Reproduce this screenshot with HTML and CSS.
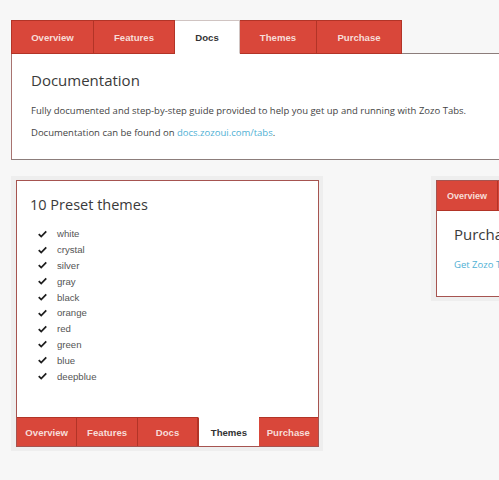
FILE: index.html
```html
<!DOCTYPE html>
<html>
<head>
<meta charset="utf-8">
<link rel="stylesheet" href="styles.css">
</head>
<body>
<div class="page">
  <div class="tabs-top">
    <div class="tabbar">
      <div class="tab w-overview">Overview</div>
      <div class="tab w-features">Features</div>
      <div class="tab active w-docs">Docs</div>
      <div class="tab w-themes">Themes</div>
      <div class="tab w-purchase">Purchase</div>
      <div class="tab-fill"></div>
    </div>
    <div class="panel panel-top">
      <h2 class="title">Documentation</h2>
      <p class="text">Fully documented and step-by-step guide provided to help you get up and running with Zozo Tabs.</p>
      <p class="text">Documentation can be found on <a class="link" href="#">docs.zozoui.com/tabs</a>.</p>
    </div>
  </div>

  <div class="row">
    <div class="frame frame-left">
      <div class="box box-bottom">
        <div class="panel-body">
          <h2 class="title title-themes">10 Preset themes</h2>
          <ul class="checklist">
            <li><svg class="check" viewBox="0 0 12 10"><path d="M1 5.2 L4.3 8.4 L11 1.6" fill="none" stroke="#1e1e1e" stroke-width="2.4"/></svg>white</li>
            <li><svg class="check" viewBox="0 0 12 10"><path d="M1 5.2 L4.3 8.4 L11 1.6" fill="none" stroke="#1e1e1e" stroke-width="2.4"/></svg>crystal</li>
            <li><svg class="check" viewBox="0 0 12 10"><path d="M1 5.2 L4.3 8.4 L11 1.6" fill="none" stroke="#1e1e1e" stroke-width="2.4"/></svg>silver</li>
            <li><svg class="check" viewBox="0 0 12 10"><path d="M1 5.2 L4.3 8.4 L11 1.6" fill="none" stroke="#1e1e1e" stroke-width="2.4"/></svg>gray</li>
            <li><svg class="check" viewBox="0 0 12 10"><path d="M1 5.2 L4.3 8.4 L11 1.6" fill="none" stroke="#1e1e1e" stroke-width="2.4"/></svg>black</li>
            <li><svg class="check" viewBox="0 0 12 10"><path d="M1 5.2 L4.3 8.4 L11 1.6" fill="none" stroke="#1e1e1e" stroke-width="2.4"/></svg>orange</li>
            <li><svg class="check" viewBox="0 0 12 10"><path d="M1 5.2 L4.3 8.4 L11 1.6" fill="none" stroke="#1e1e1e" stroke-width="2.4"/></svg>red</li>
            <li><svg class="check" viewBox="0 0 12 10"><path d="M1 5.2 L4.3 8.4 L11 1.6" fill="none" stroke="#1e1e1e" stroke-width="2.4"/></svg>green</li>
            <li><svg class="check" viewBox="0 0 12 10"><path d="M1 5.2 L4.3 8.4 L11 1.6" fill="none" stroke="#1e1e1e" stroke-width="2.4"/></svg>blue</li>
            <li><svg class="check" viewBox="0 0 12 10"><path d="M1 5.2 L4.3 8.4 L11 1.6" fill="none" stroke="#1e1e1e" stroke-width="2.4"/></svg>deepblue</li>
          </ul>
        </div>
        <div class="tabbar tabbar-bottom">
          <div class="tab tab-eq">Overview</div>
          <div class="tab tab-eq">Features</div>
          <div class="tab tab-eq">Docs</div>
          <div class="tab tab-eq active">Themes</div>
          <div class="tab tab-eq">Purchase</div>
        </div>
      </div>
    </div>

    <div class="frame frame-right">
      <div class="box box-right">
        <div class="tabbar tabbar-small">
          <div class="tab tab-small">Overview</div>
          <div class="tab tab-small">Features</div>
        </div>
        <div class="panel-body panel-right">
          <h2 class="title">Purchase</h2>
          <p class="text"><a class="link" href="#">Get Zozo Tabs</a></p>
        </div>
      </div>
    </div>
  </div>
</div>
</body>
</html>
```

FILE: styles.css
```css
html, body {
  margin: 0;
  padding: 0;
}
body {
  background: #f7f7f7;
  overflow: hidden;
  width: 499px;
  height: 480px;
  font-family: "Open Sans", "Liberation Sans", sans-serif;
}
.page {
  padding: 20px 0 0 11px;
}
.tabs-top {
  width: 560px;
}
.tabbar {
  display: flex;
}
.tab {
  box-sizing: border-box;
  background: #d9473a;
  color: #f7ddd8;
  font-family: "Liberation Sans", Arial, sans-serif;
  font-weight: bold;
  font-size: 9.6px;
  display: flex;
  align-items: center;
  justify-content: center;
  border: 1px solid #b23427;
  border-left: none;
  height: 34px;
}
.tab:first-child {
  border-left: 1px solid #b23427;
}
.tab.active {
  background: #ffffff;
  color: #333333;
  border-color: #d0c4c2;
  border-bottom-color: #ffffff;
}
.w-overview { width: 83px; }
.w-features { width: 81px; }
.w-docs { width: 65px; }
.w-themes { width: 77px; }
.w-purchase { width: 85px; }
.tab-fill {
  flex: 1;
  border-bottom: 1px solid #8c7d7b;
}
.panel {
  background: #ffffff;
}
.panel-top {
  box-sizing: border-box;
  height: 106px;
  border: 1px solid #a87370;
  border-top: none;
  border-bottom-color: #8c7d7b;
  padding: 16px 0 0 19px;
}
.title {
  margin: 0;
  font-family: "Open Sans", "Liberation Sans", sans-serif;
  font-weight: 400;
  font-size: 15px;
  color: #3a3a3a;
  line-height: 20px;
}
.text {
  margin: 14px 0 0;
  font-size: 9.5px;
  line-height: 13px;
  color: #444444;
}
.text + .text {
  margin-top: 9px;
}
.link {
  color: #4fb0d4;
  text-decoration: none;
}
.row {
  display: flex;
  align-items: flex-start;
  margin-top: 16px;
}
.frame {
  background: #eeeeee;
  padding: 4px 4px 4px 5px;
}
.frame-right {
  margin-left: 108px;
  width: 120px;
}
.box {
  background: #ffffff;
  border: 1px solid #a65450;
  box-sizing: border-box;
}
.box-bottom {
  width: 303px;
  height: 267px;
  display: flex;
  flex-direction: column;
}
.panel-body {
  flex: 1;
  padding: 14px 0 0 13px;
}
.title-themes {
  font-size: 14.5px;
}
.checklist {
  list-style: none;
  margin: 11px 0 0;
  padding: 0 0 0 8px;
}
.checklist li {
  display: flex;
  align-items: center;
  height: 15.8px;
  font-family: "Liberation Sans", Arial, sans-serif;
  font-size: 9.6px;
  color: #555555;
}
.check {
  width: 9px;
  height: 8px;
  margin-right: 10px;
}
.tabbar-bottom {
  height: 29px;
}
.tab-eq {
  flex: 1;
  height: 29px;
  border-top: 1px solid #b23427;
  border-bottom: none;
}
.tab-eq:first-child {
  border-left: none;
}
.tab-eq:last-child {
  border-right: none;
}
.tab-eq.active {
  border-top-color: #ffffff;
  border-left: 1px solid #b23427;
  border-right: none;
  border-bottom: none;
}
.box-right {
  width: 140px;
  height: 117px;
  border-right: none;
}
.tabbar-small {
  height: 30px;
}
.tab-small {
  width: 61px;
  height: 30px;
  font-size: 9px;
  border-top: none;
}
.tab-small:first-child {
  border-left: none;
}
.panel-right {
  padding: 13px 0 0 17px;
}
.panel-right .text {
  margin-top: 14px;
}
```
